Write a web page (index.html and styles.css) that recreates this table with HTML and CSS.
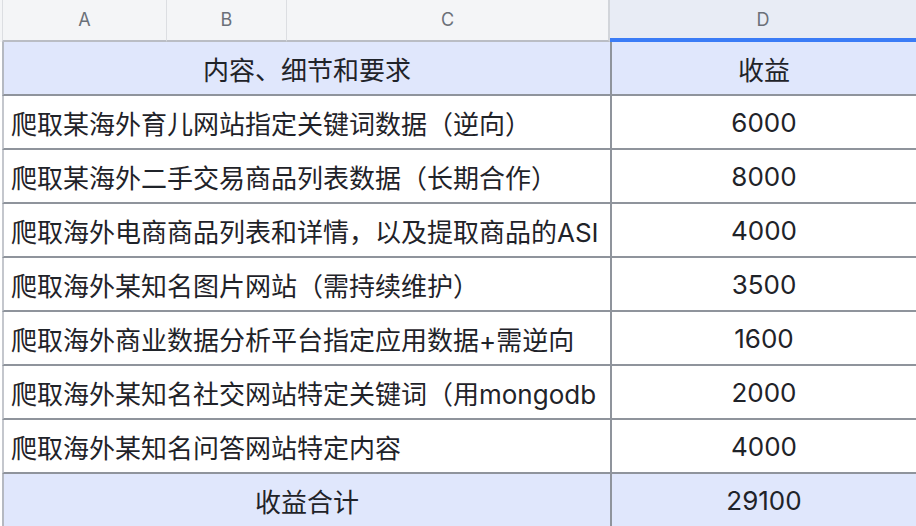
FILE: index.html
```html
<!DOCTYPE html>
<html lang="zh-CN">
<head>
<meta charset="utf-8">
<title>收益表</title>
<link rel="stylesheet" href="styles.css">
</head>
<body>
<div class="sheet">
  <div class="colhead">
    <div class="ch ch-a">A</div>
    <div class="ch ch-b">B</div>
    <div class="ch ch-c">C</div>
    <div class="ch ch-d">D</div>
  </div>
  <div class="row head">
    <div class="main center">内容、细节和要求</div>
    <div class="num">收益</div>
  </div>
  <div class="row">
    <div class="main">爬取某海外育儿网站指定关键词数据（逆向）</div>
    <div class="num">6000</div>
  </div>
  <div class="row">
    <div class="main">爬取某海外二手交易商品列表数据（长期合作）</div>
    <div class="num">8000</div>
  </div>
  <div class="row">
    <div class="main">爬取海外电商商品列表和详情，以及提取商品的ASI</div>
    <div class="num">4000</div>
  </div>
  <div class="row">
    <div class="main">爬取海外某知名图片网站（需持续维护）</div>
    <div class="num">3500</div>
  </div>
  <div class="row">
    <div class="main">爬取海外商业数据分析平台指定应用数据+需逆向</div>
    <div class="num">1600</div>
  </div>
  <div class="row">
    <div class="main">爬取海外某知名社交网站特定关键词（用mongodb</div>
    <div class="num">2000</div>
  </div>
  <div class="row">
    <div class="main">爬取海外某知名问答网站特定内容</div>
    <div class="num">4000</div>
  </div>
  <div class="row head">
    <div class="main center">收益合计</div>
    <div class="num">29100</div>
  </div>
</div>
</body>
</html>
```

FILE: styles.css
```css
html, body {
  margin: 0;
  padding: 0;
  background: #ffffff;
}

body {
  font-family: Inter, "Noto Sans CJK SC", sans-serif;
  color: #1f2329;
  overflow: hidden;
}

.sheet {
  width: 916px;
  display: flex;
  flex-direction: column;
}

.colhead {
  display: flex;
  height: 42px;
  background: #f4f5f7;
}

.ch {
  box-sizing: border-box;
  height: 42px;
  display: flex;
  align-items: center;
  justify-content: center;
  font-size: 18px;
  color: #6b7079;
  border-bottom: 2px solid #babdc4;
  padding-bottom: 2px;
}

.ch-a {
  margin-left: 2px;
  width: 165px;
  border-left: 1px solid #dcdee2;
  border-right: 1px solid #dcdee2;
}

.ch-b {
  width: 120px;
  border-right: 1px solid #dcdee2;
}

.ch-c {
  width: 323px;
  border-right: 2px solid #d2d5da;
}

.ch-d {
  flex: 1;
  background: #e8ecf5;
  border-bottom: 4px solid #3b7cf6;
  padding-bottom: 0;
}

.row {
  display: flex;
  box-sizing: border-box;
  height: 54px;
  margin-left: 2px;
  border-left: 2px solid #c4c7cd;
  border-bottom: 2px solid #8f949c;
  font-size: 26px;
}

.row.head {
  background: #e0e7fc;
  border-left-color: #b5b9c1;
}

.main {
  box-sizing: border-box;
  width: 606px;
  padding-left: 7px;
  display: flex;
  align-items: center;
  white-space: nowrap;
  overflow: hidden;
}

.main.center {
  justify-content: center;
  padding-left: 0;
}

.num {
  flex: 1;
  border-left: 2px solid #8f949c;
  display: flex;
  align-items: center;
  justify-content: center;
}
```
